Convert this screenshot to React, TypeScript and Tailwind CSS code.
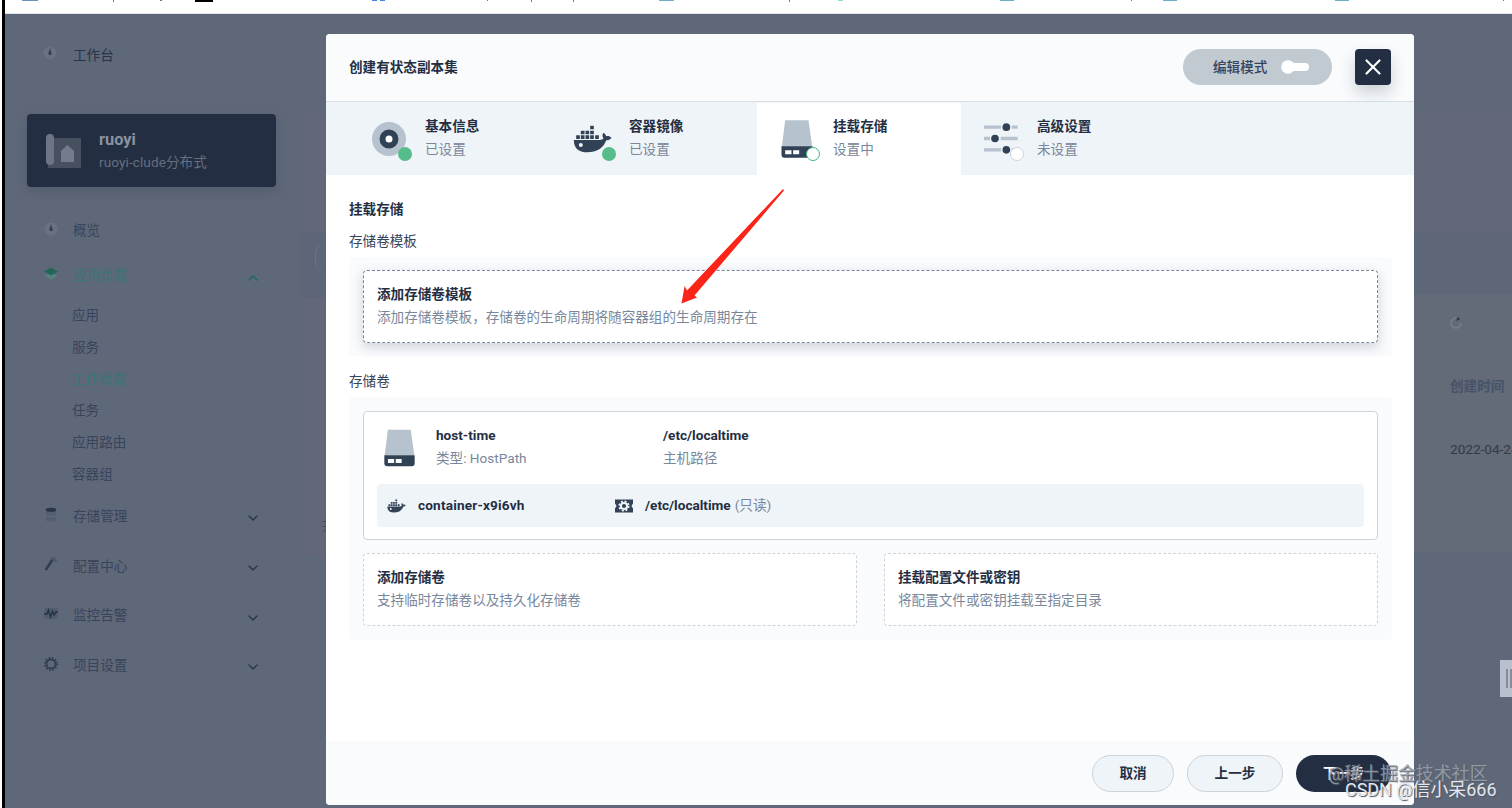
import React from "react";
import { ChevronDown, ChevronUp, X } from "lucide-react";

function BrowserStrip() {
  return (
    <svg className="block h-[14px] w-full shrink-0 bg-white" viewBox="5 0 1507 14" preserveAspectRatio="none">
      <path d="M22 0h16v1h-16z" fill="#6d8fc4" />
      <path d="M195 0h18v2h-18z" fill="#000" />
      <path d="M372 0h5v1h3v-1h5v1h-13z" fill="#4583dc" />
      <path d="M659 0h15v1h-15zM1000 0h14v1h-14zM1163 0h14v1h-14zM1335 0h14v1h-14z" fill="#6bb0c4" />
      <path d="M838 0h5v1h-5z" fill="#8fdcc4" />
      <path d="M113 0h1v2h-1zM160 0h2v1h-2zM487 0h1v1h-1zM531 0h1v2h-1zM573 0h1v2h-1zM789 0h1v2h-1zM1131 0h1v1h-1zM1503 0h1v1h-1z" fill="#777" />
      <path d="M5 13h1507v1H5z" fill="#dfe3ee" />
    </svg>
  );
}

function DockerIcon({ className }: { className: string }) {
  return (
    <svg className={className} viewBox="640 74 116 84" fill="#324256">
      <path d="M691 76h11v11h-11zM663 91h11v11h-11zM677 91h11v11h-11zM691 91h11v11h-11zM649 105h11v11h-11zM663 105h11v11h-11zM677 105h11v11h-11zM691 105h11v11h-11zM706 105h11v11h-11z" />
      <path d="M642 119h77c6 0 10-2 12-5-4-6-4-12 0-17 4 3 7 6 8 11 5-2 10-1 16 4-4 6-9 8-16 8-8 24-28 36-57 36-26 0-40-13-40-37z" />
      <circle cx="663" cy="134" r="6" fill="#eff4f9" />
    </svg>
  );
}

function StorageIcon({ className }: { className: string }) {
  return (
    <svg className={className} viewBox="183 59 95 114">
      <path d="M195 60h70l11 79h-91z" fill="#b6c2cd" />
      <path d="M184 138h93v25q0 9-9 9h-75q-9 0-9-9z" fill="#324256" />
      <path d="M195 150h19v12h-19zM219 150h18v12h-18z" fill="#fff" />
    </svg>
  );
}

function DiscIcon() {
  return (
    <svg className="size-[34px]" viewBox="0 0 34 34">
      <circle cx="17" cy="17" r="17" fill="#b6c2cd" />
      <circle cx="17" cy="17" r="6.500" fill="#fff" stroke="#324256" strokeWidth="6" />
    </svg>
  );
}

function SlidersIcon() {
  return (
    <svg className="h-[31px] w-[34px]" viewBox="792 70 102 92">
      <path d="M792 77h51v10h-51zM875 77h18v10h-18zM792 111h18v10h-18zM842 111h51v10h-51zM792 145h51v10h-51zM875 145h18v10h-18z" fill="#b6c2cd" />
      <g fill="#324256">
        <circle cx="859" cy="82" r="11.500" />
        <circle cx="825" cy="116" r="11.500" />
        <circle cx="859" cy="150" r="11.500" />
      </g>
    </svg>
  );
}

function MountIcon() {
  return (
    <svg className="h-4 w-[18px] shrink-0" viewBox="0 0 18 16">
      <path d="M0 1.500h18v4l-1.600 2.500L18 10.500v4H0v-4L1.600 8 0 5.500z" fill="#324256" />
      <circle cx="9" cy="8" r="4.700" fill="none" stroke="#eff4f9" strokeWidth="1.800" strokeDasharray="2 1.690" />
      <circle cx="9" cy="8" r="3.100" fill="none" stroke="#eff4f9" strokeWidth="2" />
    </svg>
  );
}

function DashIcon() {
  return (
    <svg className="size-4" viewBox="0 0 16 16">
      <circle cx="8" cy="8" r="6.500" fill="#6a7282" />
      <path d="M8 3l1.700 5.500a1.700 1.700 0 1 1-3.400 0z" fill="#354057" />
    </svg>
  );
}

function LayersIcon() {
  return (
    <svg className="size-4" viewBox="0 0 16 16">
      <path d="M1.500 9.500L8 6l6.500 3.500L8 14z" fill="#58807f" />
      <path d="M1 5.500L8 1.500l7 4-7 4z" fill="#236659" />
    </svg>
  );
}

function DatabaseIcon() {
  return (
    <svg className="size-4" viewBox="0 0 16 16">
      <path d="M3 3h10v10c0 2.300-10 2.300-10 0z" fill="#535f70" />
      <ellipse cx="8" cy="2.800" rx="5.300" ry="2" fill="#28364a" />
      <path d="M3 8c0 2 10 2 10 0" fill="none" stroke="#657081" />
    </svg>
  );
}

function HammerIcon() {
  return (
    <svg className="size-4" viewBox="0 0 16 16">
      <path d="M6.500 1.500c3-1 6-.500 8 3.500l-1.700 1.200-2.500-2.400z" fill="#4d596b" />
      <path d="M8.300 3l2.200 1.400-6.500 10.200-2.600-1.200z" fill="#303e51" />
    </svg>
  );
}

function MonitorIcon() {
  return (
    <svg className="size-4" viewBox="0 0 16 16">
      <path d="M1.500 2h13v11h-13z" fill="#4f5d6e" />
      <path d="M1 8h3l1.500-4 2 7 2-6 1.500 4 2-3h2" fill="none" stroke="#263448" strokeWidth="1.400" />
    </svg>
  );
}

function GearIcon() {
  return (
    <svg className="size-4" viewBox="0 0 16 16" fill="none" stroke="#303d50">
      <circle cx="8" cy="8" r="4.500" strokeWidth="1.800" />
      <circle cx="8" cy="8" r="6.200" strokeWidth="1.600" strokeDasharray="1.700 1.546" />
    </svg>
  );
}

type NavProps = { icon: React.ReactNode; label: string; open?: boolean; fold?: boolean };

function NavItem({ icon, label, open = false, fold = false }: NavProps) {
  return (
    <div className={`flex h-[23px] items-center ${open ? "text-[#387673]" : "text-[#38445b]"}`}>
      <span className="-mt-[3px] w-[31px] shrink-0 pl-[1px]">{icon}</span>
      <span className="flex-1">{label}</span>
      {fold && (open ? (
        <ChevronUp className="mt-[4px] mr-[15px] size-4 text-[#17695b]" strokeWidth={2} />
      ) : (
        <ChevronDown className="mt-[4px] mr-[15px] size-4 text-[#27344a]" strokeWidth={2} />
      ))}
    </div>
  );
}

function Sidebar() {
  const subItems = ["应用", "服务", "工作负载", "任务", "应用路由", "容器组"];
  return (
    <aside className="w-[296px] shrink-0 pt-[30px] pr-[25px] pl-[22px]">
      <div className="pl-[15px] text-[#27334a]">
        <div className="flex h-[23px] items-center">
          <span className="-mt-[5px] w-[31px]"><DashIcon /></span>
          <span>工作台</span>
        </div>
      </div>
      <div className="mt-[47px] flex h-[73px] items-center rounded bg-[#242e42] pl-[18px] shadow-[0_4px_12px_#525c6d]">
        <svg className="h-9 w-9" viewBox="0 0 36 36">
          <path d="M8 5h28v30H3V31h5z" fill="#47505f" />
          <rect x="1" y="1" width="8" height="31" rx="4" fill="#6c7585" />
          <path d="M16 29V18l6.500-6 6.500 6v11z" fill="#747c8b" />
        </svg>
        <div className="ml-[18px] pt-[2px]">
          <div className="text-[16.400px] leading-[22px] font-bold text-[#8b92a0]">ruoyi</div>
          <div className="leading-[23px] tracking-[0.080px] text-[#666f80]">ruoyi-clude分布式</div>
        </div>
      </div>
      <nav className="mt-[32px] flex flex-col pl-[15px]">
        <NavItem icon={<DashIcon />} label="概览" />
        <div className="h-[22px]" />
        <NavItem icon={<LayersIcon />} label="应用负载" open fold />
        <div className="mt-[12px] flex flex-col pl-[30px]">
          {subItems.map((item) => (
            <div key={item} className={`h-[31.800px] leading-[32px] ${item === "工作负载" ? "text-[#387673]" : "text-[#38445b]"}`}>
              {item}
            </div>
          ))}
        </div>
        <div className="mt-[15px] flex flex-col gap-[26.700px]">
          <NavItem icon={<DatabaseIcon />} label="存储管理" fold />
          <NavItem icon={<HammerIcon />} label="配置中心" fold />
          <NavItem icon={<MonitorIcon />} label="监控告警" fold />
          <NavItem icon={<GearIcon />} label="项目设置" fold />
        </div>
      </nav>
    </aside>
  );
}

type StepProps = { icon: React.ReactNode; title: string; status: string; state: "done" | "current" | "todo" };

function Step({ icon, title, status, state }: StepProps) {
  return (
    <div className={`flex h-[72px] w-[204px] pl-[23px] ${state === "current" ? "bg-white" : ""}`}>
      <div className="relative mt-[15px] flex h-[41px] w-[41px] items-center">
        {icon}
        {state === "done" && <span className="absolute right-[1px] bottom-[-2px] size-[14px] rounded-full bg-[#55bc8a]" />}
        {state === "current" && <span className="absolute right-[1px] bottom-[-2px] size-[14px] rounded-full border-[1.500px] border-[#3fb87c] bg-white" />}
        {state === "todo" && <span className="absolute right-[1px] bottom-[-2px] size-[14px] rounded-full border border-[#ccd3db] bg-white" />}
      </div>
      <div className="ml-[12px] pt-[12px] leading-[23px]">
        <div className="font-bold text-[#242e42]">{title}</div>
        <div className="text-[#79879c]">{status}</div>
      </div>
    </div>
  );
}

function AddCard({ title, text, active = false }: { title: string; text: string; active?: boolean }) {
  return (
    <div className={`h-[73px] flex-1 rounded border border-dashed bg-white px-[13px] pt-[12px] leading-[23px] ${active ? "border-[#79879c] shadow-[0_4px_12px_rgba(36,46,66,0.200)]" : "border-[#ccd3db]"}`}>
      <div className="font-bold text-[#242e42]">{title}</div>
      <div className="text-[#79879c]">{text}</div>
    </div>
  );
}

function PointerArrow() {
  return (
    <svg className="pointer-events-none absolute top-[8px] left-[352px] h-[125px] w-[112px]" viewBox="678 183 112 125">
      <path d="M783 189L784 190.500 694.500 295.500 697 297.500 681.500 303.500 684.600 286 687 290.500z" fill="#fb2418" />
    </svg>
  );
}

function VolumeCard() {
  return (
    <div className="h-[129px] rounded border border-[#ccd3db] bg-white px-[13px] pt-[12px]">
      <div className="flex h-[46px] leading-[23px]">
        <StorageIcon className="mt-[5px] ml-[7px] h-[38px] w-[31px]" />
        <div className="ml-[21px] w-[227px]">
          <div className="font-bold text-[#242e42]">host-time</div>
          <div className="text-[#79879c]">类型: HostPath</div>
        </div>
        <div>
          <div className="font-bold text-[#242e42]">/etc/localtime</div>
          <div className="text-[#79879c]">主机路径</div>
        </div>
      </div>
      <div className="mt-[14px] flex h-[43px] items-center rounded bg-[#eff4f9] pl-[10px]">
        <DockerIcon className="h-[14px] w-[19px]" />
        <span className="ml-[12px] w-[197px] font-bold tracking-[0.180px] text-[#242e42]">container-x9i6vh</span>
        <MountIcon />
        <span className="ml-[12px] font-bold text-[#242e42]">/etc/localtime</span>
        <span className="ml-1 text-[#79879c]">(只读)</span>
      </div>
    </div>
  );
}

function Dialog() {
  return (
    <section className="mt-5 flex h-[771px] w-[1088px] shrink-0 flex-col overflow-hidden rounded bg-white">
      <header className="flex h-[68px] shrink-0 items-center border-b border-[#d8dfe5] bg-[#f9fbfd] pr-[23px] pb-[1px] pl-[23px]">
        <h1 className="flex-1 font-bold text-[#242e42]">创建有状态副本集</h1>
        <div className="flex h-9 w-[149px] items-center rounded-full bg-[#c1c9d1] pl-[30px] text-[#36435c]">
          <span className="w-[68px] font-medium">编辑模式</span>
          <svg className="h-[14px] w-[28px]" viewBox="0 0 28 14" fill="#fff">
            <circle cx="7" cy="7" r="6.800" />
            <rect x="6" y="3" width="22" height="8" rx="4" />
          </svg>
        </div>
        <button className="ml-[23px] flex size-9 items-center justify-center rounded bg-[#242e42] text-white shadow-[0_8px_16px_rgba(36,46,66,0.200)]">
          <X className="size-[26px]" strokeWidth={2} />
        </button>
      </header>
      <div className="flex h-[73px] shrink-0 bg-[#eff4f9] pt-[1px] pl-[23px]">
        <Step icon={<DiscIcon />} title="基本信息" status="已设置" state="done" />
        <Step icon={<DockerIcon className="h-[28px] w-[39px] -translate-x-[3px]" />} title="容器镜像" status="已设置" state="done" />
        <Step icon={<StorageIcon className="ml-[1px] h-[38px] w-[32px]" />} title="挂载存储" status="设置中" state="current" />
        <Step icon={<SlidersIcon />} title="高级设置" status="未设置" state="todo" />
      </div>
      <div className="relative flex-1 pt-[23px] pr-[22px] pl-[23px] leading-[23px] text-[#242e42]">
        <h2 className="font-bold">挂载存储</h2>
        <div className="mt-[9px] text-[#36435c]">存储卷模板</div>
        <div className="mt-[4px] flex h-[99px] rounded bg-[#f9fbfd] px-[14px] py-[13px]">
          <AddCard title="添加存储卷模板" text="添加存储卷模板，存储卷的生命周期将随容器组的生命周期存在" active />
        </div>
        <div className="mt-[14px] text-[#36435c]">存储卷</div>
        <div className="mt-[4px] rounded bg-[#f9fbfd] px-[14px] pt-[14px] pb-[14px]">
          <VolumeCard />
          <div className="mt-[13px] flex gap-[27px]">
            <AddCard title="添加存储卷" text="支持临时存储卷以及持久化存储卷" />
            <AddCard title="挂载配置文件或密钥" text="将配置文件或密钥挂载至指定目录" />
          </div>
        </div>
        <PointerArrow />
      </div>
      <footer className="flex h-16 shrink-0 items-center justify-end gap-[13px] bg-[#f9fbfd] pr-[23px] font-bold">
        <button className="h-[37px] w-[82px] rounded-full border border-[#ccd3db] bg-[#eff4f9] text-[#242e42]">取消</button>
        <button className="h-[37px] w-[96px] rounded-full border border-[#ccd3db] bg-[#eff4f9] text-[#242e42]">上一步</button>
        <button className="h-[37px] w-[95px] rounded-full bg-[#242e42] text-white">下一步</button>
      </footer>
    </section>
  );
}

function RightBackdrop() {
  return (
    <div className="flex min-w-0 flex-1 flex-col overflow-hidden whitespace-nowrap">
      <div className="mt-[100px] h-[118px] bg-[#626877]" />
      <div className="h-[62px] bg-[#5e6778]" />
      <div className="h-[258px] bg-[#636a78] pl-9 leading-[23px]">
        <svg className="mt-[22px] ml-[-1px] size-[14px]" viewBox="0 0 14 14">
          <path d="M7 2a5 5 0 1 0 5 5" fill="none" stroke="#798190" strokeWidth="1.500" />
          <path d="M7 5l2-4 2 2z" fill="#293447" />
        </svg>
        <div className="mt-[45px] font-bold text-[#475369]">创建时间</div>
        <div className="mt-[40px] text-[#303a4d]">2022-04-24</div>
      </div>
      <div className="mt-[108px] flex h-[37px] w-3 items-center justify-end gap-[2px] self-end bg-[#b8bfcd]">
        <span className="h-[19px] w-[2px] bg-[#858b99]" />
        <span className="h-[19px] w-[2px] bg-[#858b99]" />
      </div>
    </div>
  );
}

export default function App() {
  return (
    <div className="relative flex h-[808px] w-[1512px] overflow-hidden bg-[#5f6878] font-[Roboto,'Noto_Sans_CJK_SC',sans-serif] text-[13.600px]">
      <div className="w-[5px] shrink-0 border-r-[3px] border-l-2 border-l-white border-r-black" />
      <div className="flex min-w-0 flex-1 flex-col">
        <BrowserStrip />
        <div className="flex flex-1">
          <Sidebar />
          <div className="flex w-[25px] shrink-0 flex-col overflow-hidden">
            <div className="mt-[100px] h-[118px] bg-[#626877]" />
            <div className="flex h-[66px] justify-end bg-[#5d6678]">
              <div className="mt-[11px] h-[30px] w-[11px] rounded-l-full border-l border-[#6b7382]" />
            </div>
            <div className="h-[258px] bg-[#626878] pt-[217px] pl-[21px] text-[#424c62]">共</div>
          </div>
          <Dialog />
          <RightBackdrop />
        </div>
      </div>
      <div className="absolute top-[762px] left-[1328px] text-[17.950px] leading-6 whitespace-nowrap text-[#a1a7b1]/80 [text-shadow:1px_1px_1px_#555d6a]">@稀土掘金技术社区</div>
      <div className="absolute top-[778px] left-[1345px] text-[17.950px] leading-6 whitespace-nowrap text-[#e4e7ec] [text-shadow:1px_1px_1px_#4d5563]">CSDN @信小呆666</div>
    </div>
  );
}
